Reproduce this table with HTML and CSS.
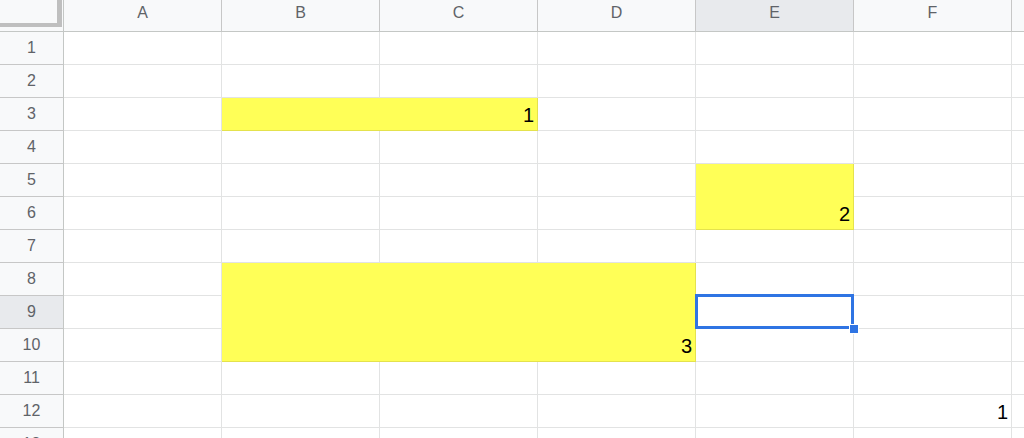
FILE: index.html
```html
<!DOCTYPE html>
<html lang="en">
<head>
<meta charset="utf-8">
<title>Sheet</title>
<link rel="stylesheet" href="styles.css">
</head>
<body>
<div class="sheet">
  <div class="corner"><div class="freeze"></div></div>
  <div class="colhead">A</div>
  <div class="colhead">B</div>
  <div class="colhead">C</div>
  <div class="colhead">D</div>
  <div class="colhead active">E</div>
  <div class="colhead">F</div>
  <div class="colhead">G</div>

  <div class="rowhead">1</div>
  <div class="cell"></div><div class="cell"></div><div class="cell"></div><div class="cell"></div><div class="cell"></div><div class="cell"></div><div class="cell"></div>

  <div class="rowhead">2</div>
  <div class="cell"></div><div class="cell"></div><div class="cell"></div><div class="cell"></div><div class="cell"></div><div class="cell"></div><div class="cell"></div>

  <div class="rowhead">3</div>
  <div class="cell"></div><div class="cell fill span-c2">1</div><div class="cell"></div><div class="cell"></div><div class="cell"></div><div class="cell"></div>

  <div class="rowhead">4</div>
  <div class="cell"></div><div class="cell"></div><div class="cell"></div><div class="cell"></div><div class="cell"></div><div class="cell"></div><div class="cell"></div>

  <div class="rowhead">5</div>
  <div class="cell"></div><div class="cell"></div><div class="cell"></div><div class="cell"></div><div class="cell fill span-r2">2</div><div class="cell"></div><div class="cell"></div>

  <div class="rowhead">6</div>
  <div class="cell"></div><div class="cell"></div><div class="cell"></div><div class="cell"></div><div class="cell"></div><div class="cell"></div>

  <div class="rowhead">7</div>
  <div class="cell"></div><div class="cell"></div><div class="cell"></div><div class="cell"></div><div class="cell"></div><div class="cell"></div><div class="cell"></div>

  <div class="rowhead">8</div>
  <div class="cell"></div><div class="cell fill span-c3 span-r3">3</div><div class="cell"></div><div class="cell"></div><div class="cell"></div>

  <div class="rowhead active">9</div>
  <div class="cell"></div><div class="cell selected"><span class="selection"></span><span class="handle"></span></div><div class="cell"></div><div class="cell"></div>

  <div class="rowhead">10</div>
  <div class="cell"></div><div class="cell"></div><div class="cell"></div><div class="cell"></div>

  <div class="rowhead">11</div>
  <div class="cell"></div><div class="cell"></div><div class="cell"></div><div class="cell"></div><div class="cell"></div><div class="cell"></div><div class="cell"></div>

  <div class="rowhead">12</div>
  <div class="cell"></div><div class="cell"></div><div class="cell"></div><div class="cell"></div><div class="cell"></div><div class="cell">1</div><div class="cell"></div>

  <div class="rowhead">13</div>
  <div class="cell"></div><div class="cell"></div><div class="cell"></div><div class="cell"></div><div class="cell"></div><div class="cell"></div><div class="cell"></div>
</div>
</body>
</html>
```

FILE: styles.css
```css
html, body {
  margin: 0;
  padding: 0;
  width: 1024px;
  height: 438px;
  overflow: hidden;
  background: #ffffff;
}

.sheet {
  display: grid;
  grid-template-columns: 64px repeat(7, 158px);
  grid-template-rows: 32px repeat(13, 33px);
  font-family: "Liberation Sans", Arial, sans-serif;
}

.corner {
  background: #f8f9fa;
  border-right: 1px solid #c4c7c5;
  border-bottom: 1px solid #c4c7c5;
  box-sizing: border-box;
}

.freeze {
  width: 62px;
  height: 27px;
  box-sizing: border-box;
  border-right: 5px solid #bfbfbf;
  border-bottom: 4px solid #bfbfbf;
}

.colhead {
  box-sizing: border-box;
  background: #f8f9fa;
  border-right: 1px solid #c7c7c7;
  border-bottom: 1px solid #c4c7c5;
  color: #5f6368;
  font-size: 16px;
  display: flex;
  align-items: center;
  justify-content: center;
  padding-bottom: 6px;
}

.rowhead {
  box-sizing: border-box;
  background: #f8f9fa;
  border-right: 1px solid #c4c7c5;
  border-bottom: 1px solid #c7c7c7;
  color: #5f6368;
  font-size: 16px;
  display: flex;
  align-items: center;
  justify-content: center;
}

.active {
  background: #e8eaed;
}

.cell {
  box-sizing: border-box;
  border-right: 1px solid #e2e3e3;
  border-bottom: 1px solid #e2e3e3;
  font-size: 20px;
  color: #000000;
  display: flex;
  align-items: flex-end;
  justify-content: flex-end;
  padding: 0 3px 3px 0;
  line-height: 23px;
}

.fill {
  background: #ffff57;
  border-right-color: #e4e24d;
  border-bottom-color: #e4e24d;
}

.span-c2 { grid-column: span 2; }
.span-c3 { grid-column: span 3; }
.span-r2 { grid-row: span 2; }
.span-r3 { grid-row: span 3; }

.selected {
  position: relative;
}

.selection {
  position: absolute;
  left: -1px;
  top: -2px;
  right: -1px;
  bottom: -1px;
  border: 3px solid #2f74e3;
}

.handle {
  position: absolute;
  right: -6px;
  bottom: -6px;
  width: 8px;
  height: 8px;
  background: #2f74e3;
  border: 1px solid #ffffff;
}
```
